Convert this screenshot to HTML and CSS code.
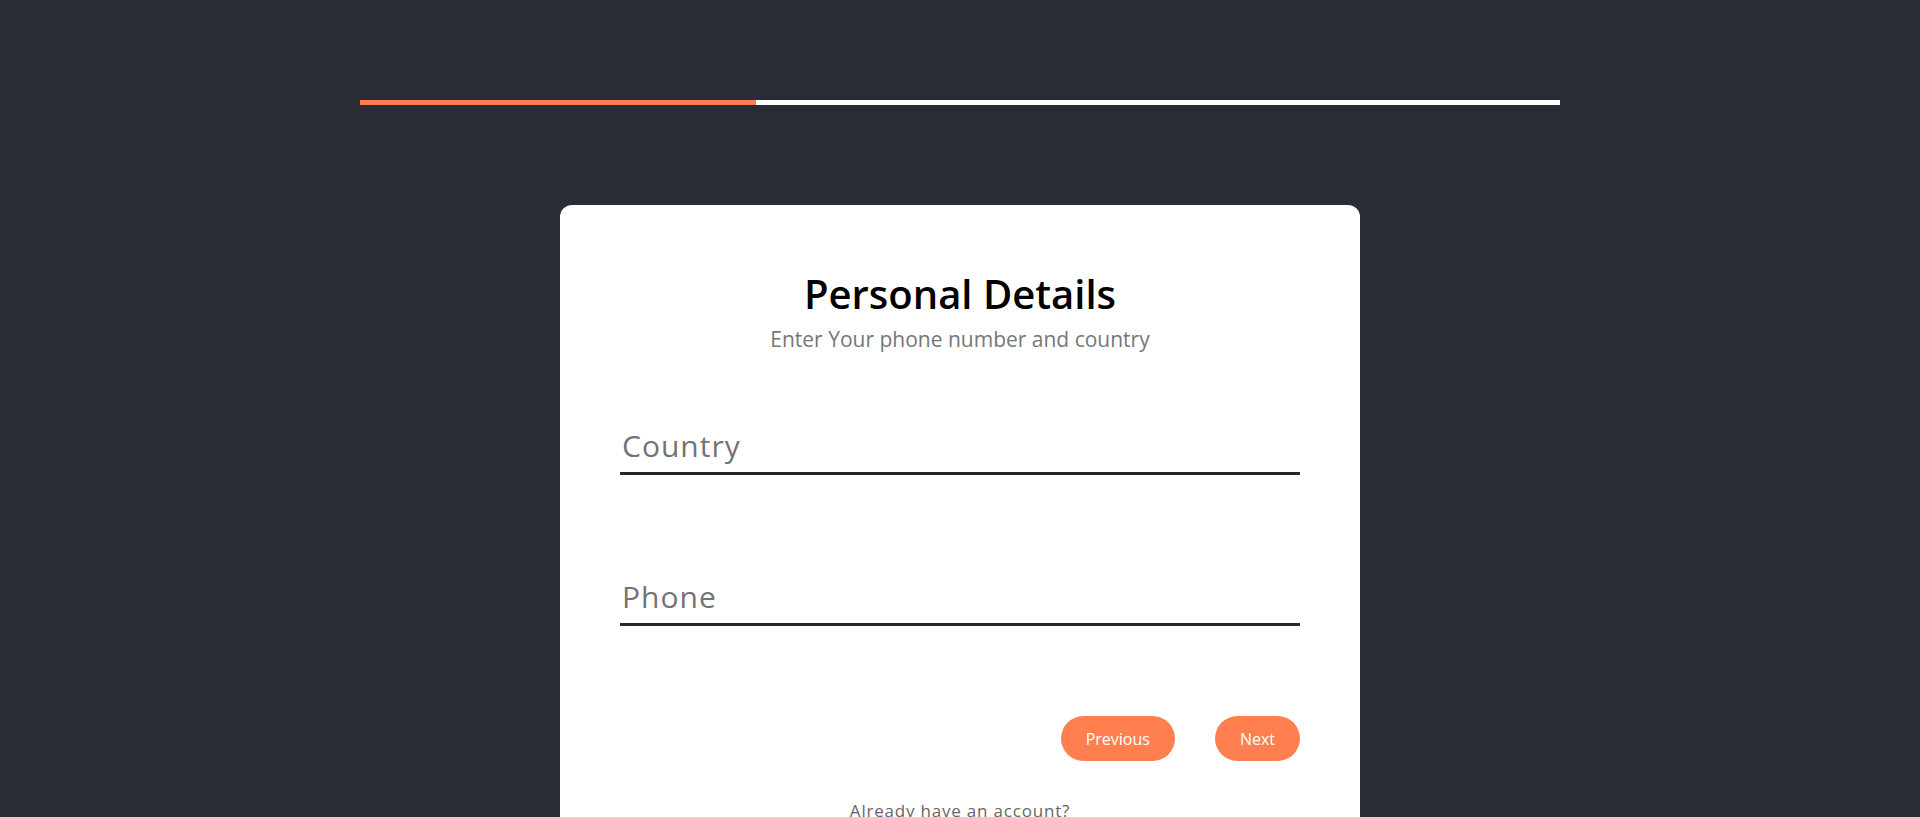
FILE: index.html
```html
<!DOCTYPE html>
<html lang="en">
<head>
<meta charset="utf-8">
<title>Personal Details</title>
<link rel="stylesheet" href="styles.css">
</head>
<body>
  <div class="progress">
    <div class="progress-fill" style="width: 33%"></div>
  </div>
  <main class="card">
    <h1 class="title">Personal Details</h1>
    <p class="subtitle">Enter Your phone number and country</p>
    <form class="form">
      <input class="field field-country" type="text" placeholder="Country">
      <input class="field field-phone" type="tel" placeholder="Phone">
      <div class="actions">
        <button type="button" class="btn">Previous</button>
        <button type="button" class="btn">Next</button>
      </div>
    </form>
    <p class="account">Already have an account?</p>
  </main>
</body>
</html>
```

FILE: styles.css
```css
* {
  box-sizing: border-box;
}

html, body {
  margin: 0;
  padding: 0;
}

body {
  background: #282c34;
  font-family: "Open Sans", "Noto Sans", sans-serif;
  overflow: hidden;
}

.progress {
  width: 1200px;
  height: 5px;
  margin: 100px auto 0;
  background: #ffffff;
  display: flex;
}

.progress-fill {
  height: 100%;
  background: #ff7f50;
}

.card {
  width: 800px;
  margin: 100px auto 0;
  background: #ffffff;
  border-radius: 12px;
  padding: 69px 60px 80px;
  display: flex;
  flex-direction: column;
}

.title {
  margin: 0;
  font-size: 40px;
  line-height: 40px;
  font-weight: 600;
  color: #000000;
  text-align: center;
}

.subtitle {
  margin: 13px 0 0;
  font-size: 21px;
  line-height: 24px;
  color: #777777;
  text-align: center;
}

.form {
  display: flex;
  flex-direction: column;
  margin-top: 77px;
}

.field {
  display: block;
  box-sizing: content-box;
  width: calc(100% - 2px);
  height: 36px;
  line-height: 36px;
  padding: 0 0 8px 2px;
  margin: 0;
  border: none;
  border-bottom: 3px solid #23272f;
  font-family: inherit;
  font-size: 30px;
  letter-spacing: 1px;
  color: #333333;
  background: transparent;
  outline: none;
}

.field::placeholder {
  color: #737373;
}

.field-phone {
  margin-top: 104px;
}

.actions {
  display: flex;
  justify-content: flex-end;
  gap: 40px;
  margin-top: 90px;
}

.btn {
  height: 45px;
  padding: 0 25px;
  border: none;
  border-radius: 23px;
  background: #ff7f50;
  color: #ffffff;
  font-family: inherit;
  font-size: 16px;
  font-weight: 500;
  cursor: pointer;
}

.account {
  margin: 38px 0 0;
  font-size: 17px;
  letter-spacing: 0.8px;
  line-height: 24px;
  color: #666666;
  text-align: center;
}
```
